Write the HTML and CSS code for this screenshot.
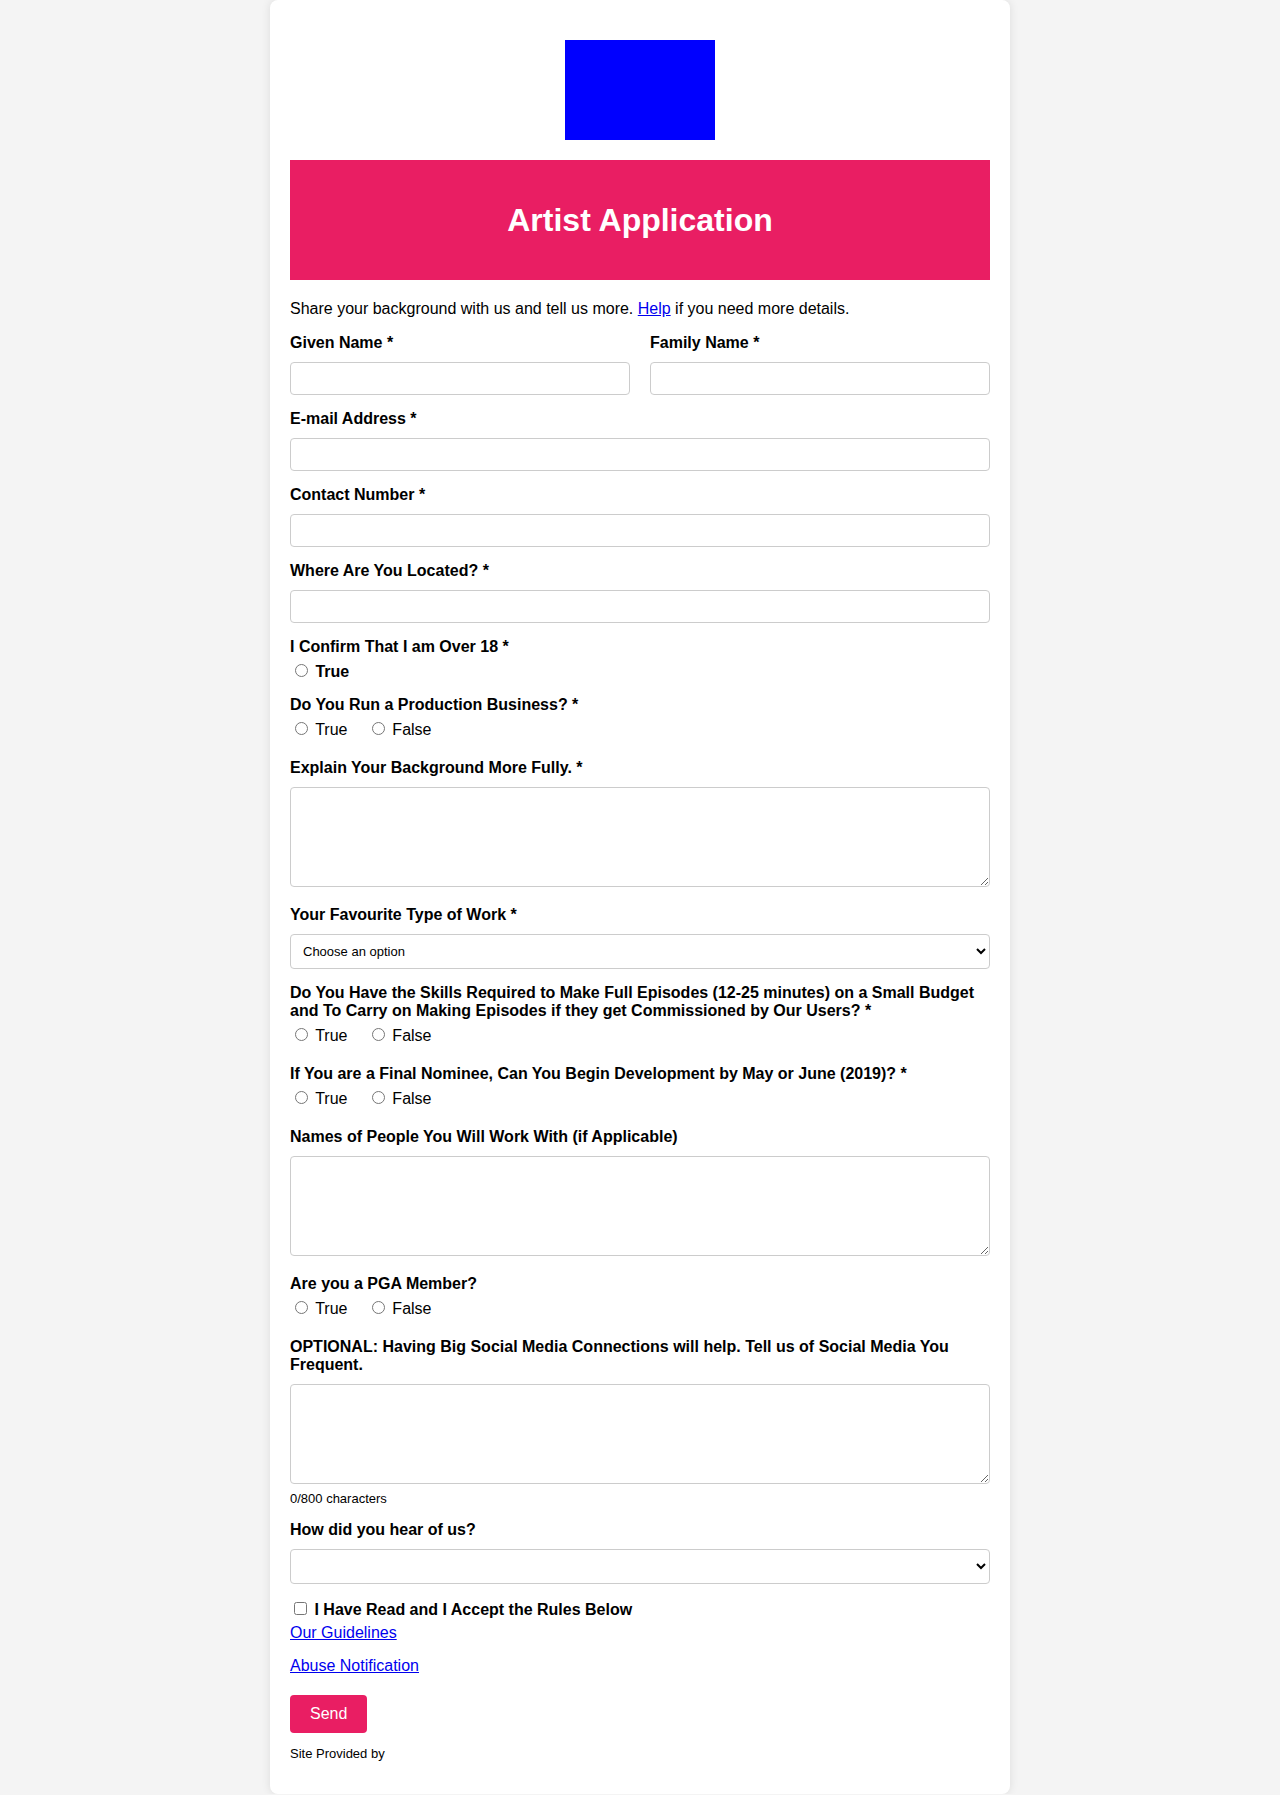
FILE: index.html
```html
<!DOCTYPE html>
<html lang="en">
<head>
<meta charset="utf-8">
<title>Artist Application</title>
<link rel="stylesheet" href="styles.css">
</head>
<body>
<div class="card">
  <div class="logo-wrap"><div class="logo"></div></div>
  <div class="banner"><h1>Artist Application</h1></div>
  <p class="intro">Share your background with us and tell us more. <a href="#">Help</a> if you need more details.</p>
  <form class="form">
    <div class="row2">
      <div class="group">
        <label class="field-label">Given Name *</label>
        <input class="text" type="text">
      </div>
      <div class="group">
        <label class="field-label">Family Name *</label>
        <input class="text" type="text">
      </div>
    </div>
    <div class="group">
      <label class="field-label">E-mail Address *</label>
      <input class="text" type="email">
    </div>
    <div class="group">
      <label class="field-label">Contact Number *</label>
      <input class="text" type="tel">
    </div>
    <div class="group">
      <label class="field-label">Where Are You Located? *</label>
      <input class="text" type="text">
    </div>
    <div class="group">
      <label class="field-label radio-title">I Confirm That I am Over 18 *</label>
      <div class="options">
        <label class="opt strong"><input type="radio" name="age"> True</label>
      </div>
    </div>
    <div class="group">
      <label class="field-label radio-title">Do You Run a Production Business? *</label>
      <div class="options pair">
        <label class="opt"><input type="radio" name="biz"> True</label>
        <label class="opt"><input type="radio" name="biz"> False</label>
      </div>
    </div>
    <div class="group">
      <label class="field-label">Explain Your Background More Fully. *</label>
      <textarea class="area"></textarea>
    </div>
    <div class="group">
      <label class="field-label">Your Favourite Type of Work *</label>
      <select class="select"><option>Choose an option</option></select>
    </div>
    <div class="group">
      <label class="field-label radio-title">Do You Have the Skills Required to Make Full Episodes (12-25 minutes) on a Small Budget and To Carry on Making Episodes if they get Commissioned by Our Users? *</label>
      <div class="options pair">
        <label class="opt"><input type="radio" name="skills"> True</label>
        <label class="opt"><input type="radio" name="skills"> False</label>
      </div>
    </div>
    <div class="group">
      <label class="field-label radio-title">If You are a Final Nominee, Can You Begin Development by May or June (2019)? *</label>
      <div class="options pair">
        <label class="opt"><input type="radio" name="dev"> True</label>
        <label class="opt"><input type="radio" name="dev"> False</label>
      </div>
    </div>
    <div class="group">
      <label class="field-label">Names of People You Will Work With (if Applicable)</label>
      <textarea class="area"></textarea>
    </div>
    <div class="group">
      <label class="field-label radio-title">Are you a PGA Member?</label>
      <div class="options pair">
        <label class="opt"><input type="radio" name="pga"> True</label>
        <label class="opt"><input type="radio" name="pga"> False</label>
      </div>
    </div>
    <div class="group">
      <label class="field-label">OPTIONAL: Having Big Social Media Connections will help. Tell us of Social Media You Frequent.</label>
      <textarea class="area"></textarea>
      <div class="count">0/800 characters</div>
    </div>
    <div class="group">
      <label class="field-label">How did you hear of us?</label>
      <select class="select"><option></option></select>
    </div>
    <div class="group check-group">
      <label class="check"><input type="checkbox"> I Have Read and I Accept the Rules Below</label>
    </div>
    <div class="links">
      <p><a href="#">Our Guidelines</a></p>
      <p><a href="#">Abuse Notification</a></p>
    </div>
    <button class="send" type="button">Send</button>
  </form>
  <p class="footer">Site Provided by</p>
</div>
</body>
</html>
```
FILE: styles.css
```css
html, body {
  margin: 0;
  padding: 0;
}
body {
  background: #f4f4f4;
  font-family: "Liberation Sans", Arial, Helvetica, sans-serif;
  font-size: 16px;
  color: #000;
}
.card {
  width: 700px;
  margin: 0 auto;
  padding: 20px;
  background: #fff;
  border-radius: 8px;
  box-shadow: 0 0 10px rgba(0, 0, 0, 0.1);
}
.logo-wrap {
  margin: 20px 0;
}
.logo {
  width: 150px;
  height: 100px;
  margin: 0 auto;
  background: #0000ff;
}
.banner {
  height: 120px;
  background: #e91e63;
  color: #fff;
  display: flex;
  align-items: center;
  justify-content: center;
}
.banner h1 {
  margin: 0;
  font-size: 32px;
  font-weight: bold;
}
.intro {
  margin: 20px 0 16px;
}
.intro a,
.links a {
  color: #0000ee;
}
.row2 {
  display: grid;
  grid-template-columns: 1fr 1fr;
  column-gap: 20px;
}
.group {
  margin-bottom: 15px;
}
.field-label {
  display: block;
  font-weight: bold;
  margin-bottom: 10px;
}
.field-label.radio-title {
  margin-bottom: 5px;
}
.text {
  display: block;
  width: 100%;
  box-sizing: border-box;
  height: 33px;
  padding: 8px;
  border: 1px solid #ccc;
  border-radius: 4px;
  font-family: inherit;
  font-size: 13px;
  background: #fff;
}
.area {
  width: 100%;
  box-sizing: border-box;
  height: 100px;
  padding: 8px;
  border: 1px solid #ccc;
  border-radius: 4px;
  font-family: inherit;
  font-size: 13px;
  resize: vertical;
}
.select {
  display: block;
  width: 100%;
  box-sizing: border-box;
  height: 35px;
  padding: 8px;
  border: 1px solid #ccc;
  border-radius: 4px;
  background: #fff;
  color: #000;
  font-family: inherit;
  font-size: 13px;
}
.options.pair {
  padding-bottom: 5px;
}
.opt {
  margin-right: 15px;
}
.opt.strong {
  font-weight: bold;
}
.count {
  margin-top: 3px;
  font-size: 13px;
}
.check-group {
  margin-bottom: 5px;
}
.check {
  font-weight: bold;
}
.links p {
  margin: 0 0 15px;
}
.send {
  display: block;
  margin-top: 20px;
  padding: 10px 20px;
  border: none;
  border-radius: 4px;
  background: #e91e63;
  color: #fff;
  font-family: inherit;
  font-size: 16px;
  line-height: 18px;
}
.footer {
  margin: 13px 0;
  font-size: 13px;
}
```
